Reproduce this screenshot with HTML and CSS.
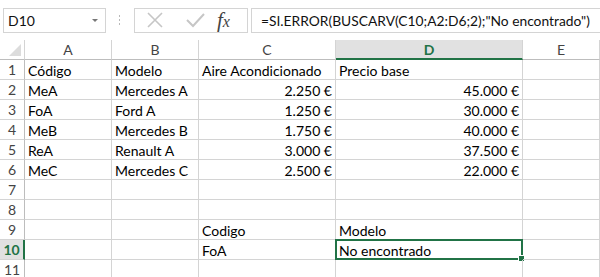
FILE: index.html
```html
<!DOCTYPE HTML>
<html>
    <head>
        <meta charset="UTF-8">
        <title>Hoja</title>
        <link rel="stylesheet" href="styles.css">
    </head>
    <body>
        <div id="wrap">
            <div class="bar">
                <div class="namebox">
                    <span>D10</span>
                    <i class="arrow"></i>
                </div>
                <div class="dots"><b></b><b></b><b></b></div>
                <div class="btns">
                    <svg class="ico" width="20" height="20" viewBox="0 0 20 20"><path d="M3 3L17 17M17 3L3 17" stroke="#c6c6c6" stroke-width="1.6" fill="none"/></svg>
                    <svg class="ico" width="20" height="20" viewBox="0 0 20 20"><path d="M2 10L8 16L19 4" stroke="#c6c6c6" stroke-width="2" fill="none"/></svg>
                    <span class="fx">f<small>x</small></span>
                </div>
                <div class="formula">=SI.ERROR(BUSCARV(C10;A2:D6;2);"No encontrado")</div>
            </div>

            <div class="grid">
                <div class="hd corner"><i></i></div>
                <div class="hd">A</div>
                <div class="hd">B</div>
                <div class="hd">C</div>
                <div class="hd sel">D</div>
                <div class="hd">E</div>

                <div class="rh">1</div><div class="c">Código</div><div class="c">Modelo</div><div class="c">Aire Acondicionado</div><div class="c">Precio base</div><div class="c"></div>
                <div class="rh">2</div><div class="c">MeA</div><div class="c">Mercedes A</div><div class="c n">2.250 €</div><div class="c n">45.000 €</div><div class="c"></div>
                <div class="rh">3</div><div class="c">FoA</div><div class="c">Ford A</div><div class="c n">1.250 €</div><div class="c n">30.000 €</div><div class="c"></div>
                <div class="rh">4</div><div class="c">MeB</div><div class="c">Mercedes B</div><div class="c n">1.750 €</div><div class="c n">40.000 €</div><div class="c"></div>
                <div class="rh">5</div><div class="c">ReA</div><div class="c">Renault A</div><div class="c n">3.000 €</div><div class="c n">37.500 €</div><div class="c"></div>
                <div class="rh">6</div><div class="c">MeC</div><div class="c">Mercedes C</div><div class="c n">2.500 €</div><div class="c n">22.000 €</div><div class="c"></div>
                <div class="rh">7</div><div class="c"></div><div class="c"></div><div class="c"></div><div class="c"></div><div class="c"></div>
                <div class="rh">8</div><div class="c"></div><div class="c"></div><div class="c"></div><div class="c"></div><div class="c"></div>
                <div class="rh">9</div><div class="c"></div><div class="c"></div><div class="c">Codigo</div><div class="c">Modelo</div><div class="c"></div>
                <div class="rh sel">10</div><div class="c"></div><div class="c"></div><div class="c">FoA</div><div class="c active">No encontrado<i class="handle"></i></div><div class="c"></div>
                <div class="rh">11</div><div class="c"></div><div class="c"></div><div class="c"></div><div class="c"></div><div class="c"></div>
            </div>
        </div>
    </body>
</html>
```

FILE: styles.css
```css
body{margin:0;font-family: Lato,"Liberation Sans",sans-serif;background:#fff;}

#wrap{
    width: 600px;
    height: 277px;
    overflow: hidden;
}

/* formula bar */
.bar{
    display: flex;
    align-items: center;
    height: 40px;
    padding: 0 0 0 3px;
    box-sizing: border-box;
}
.namebox{
    display: flex;
    align-items: center;
    justify-content: space-between;
    width: 103px;
    height: 25px;
    box-sizing: border-box;
    border: 1px solid #d4d4d4;
    padding: 0 7px 0 4px;
    font-size: 14px;
    color: #111;
}
.namebox .arrow{
    width: 0;
    height: 0;
    border-left: 3px solid transparent;
    border-right: 3px solid transparent;
    border-top: 3px solid #777;
}
.dots{
    display: flex;
    flex-direction: column;
    gap: 2px;
    margin: 0 14px 0 13px;
}
.dots b{
    width: 1px;
    height: 2px;
    background: #b9b9b9;
}
.btns{
    display: flex;
    align-items: center;
    width: 114px;
    height: 25px;
    box-sizing: border-box;
    border: 1px solid #d4d4d4;
    padding: 0 0 0 10px;
}
.btns .ico{
    margin-right: 20px;
}
.btns .ico + .ico{
    margin-right: 12px;
}
.fx{
    font-family: "Liberation Serif",serif;
    font-style: italic;
    font-size: 21px;
    line-height: 1;
    color: #444;
}
.fx small{
    font-size: 16px;
}
.formula{
    flex: 1;
    height: 25px;
    line-height: 23px;
    margin-left: 3px;
    box-sizing: border-box;
    border: 1px solid #d4d4d4;
    border-right: none;
    padding-left: 9px;
    font-size: 13.8px;
    color: #111;
    white-space: nowrap;
}

/* sheet */
.grid{
    display: grid;
    grid-template-columns: 25px 87px 87px 137px 187px 1fr;
    grid-auto-rows: 20px;
}
.hd{
    display: flex;
    align-items: center;
    justify-content: center;
    box-sizing: border-box;
    border-right: 1px solid #d4d4d4;
    border-bottom: 1px solid #bdbdbd;
    font-size: 14px;
    color: #444;
}
.hd.sel{
    background: #e1e1e1;
    color: #217346;
    font-weight: bold;
    border-bottom: 2px solid #217346;
}
.corner{
    justify-content: flex-end;
    align-items: flex-end;
    padding: 0 3px 3px 0;
}
.corner i{
    width: 0;
    height: 0;
    border-left: 12px solid transparent;
    border-bottom: 12px solid #dcdcdc;
}
.rh{
    display: flex;
    align-items: center;
    justify-content: center;
    box-sizing: border-box;
    border-right: 1px solid #bdbdbd;
    border-bottom: 1px solid #d4d4d4;
    font-size: 14px;
    color: #444;
}
.rh.sel{
    background: #e1e1e1;
    color: #217346;
    font-weight: bold;
    border-right: 2px solid #217346;
}
.c{
    position: relative;
    display: flex;
    align-items: center;
    box-sizing: border-box;
    border-right: 1px solid #d4d4d4;
    border-bottom: 1px solid #d4d4d4;
    padding: 1px 3px 0;
    font-size: 14px;
    color: #000;
    white-space: nowrap;
}
.c.n{
    justify-content: flex-end;
}
.c.active{
    border: 2px solid #217346;
    margin: -1px 0 0 -1px;
    padding-left: 2px;
}
.handle{
    position: absolute;
    right: -4px;
    bottom: -4px;
    width: 5px;
    height: 5px;
    background: #217346;
    border: 1px solid #fff;
}
```
